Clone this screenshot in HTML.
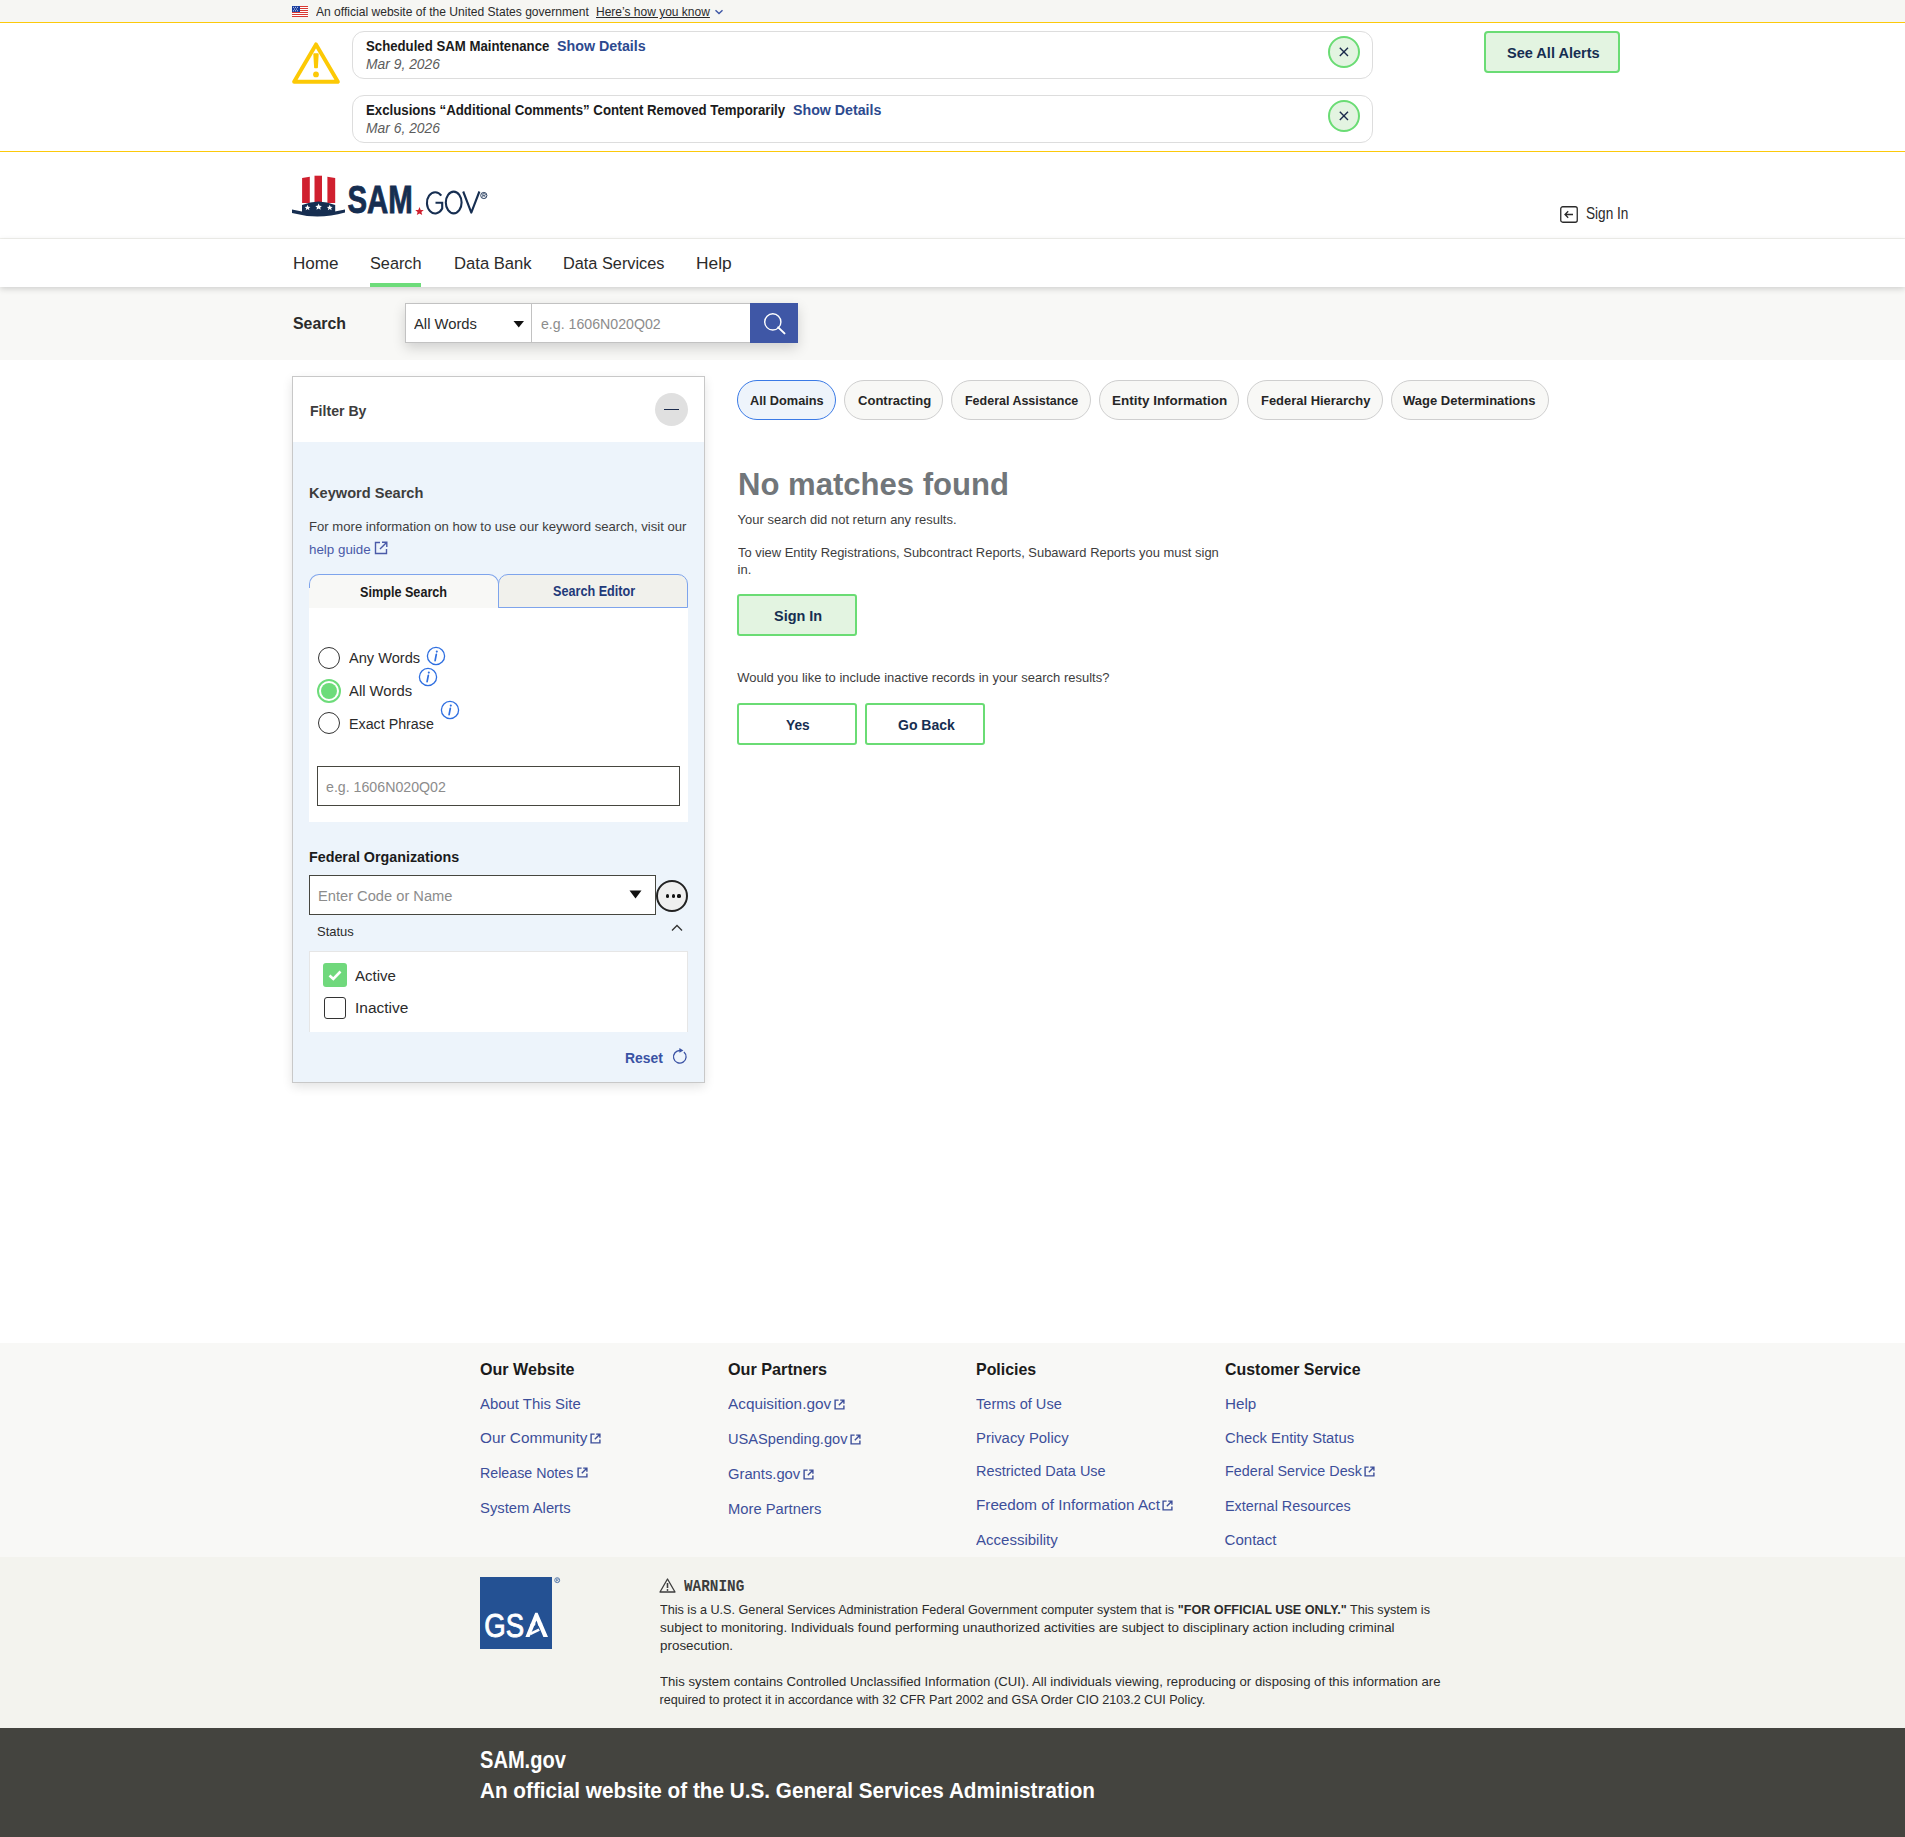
<!DOCTYPE html>
<html lang="en"><head><meta charset="utf-8"><title>SAM.gov Search</title>
<style>
html,body{margin:0;padding:0;}
body{width:1905px;height:1837px;position:relative;overflow:hidden;background:#fff;font-family:"Liberation Sans",sans-serif;}
.a{position:absolute;box-sizing:border-box;}
.t{position:absolute;white-space:nowrap;line-height:1;}
svg{position:absolute;overflow:visible;}
</style></head><body>
<!-- banner -->
<div class="a" style="left:0;top:0;width:1905px;height:22px;background:#f6f6f3;"></div>
<div class="a" style="left:0;top:22px;width:1905px;height:1px;background:#fcc90b;"></div>
<svg style="left:292px;top:6px" width="16" height="11" viewBox="0 0 16 11">
 <rect width="16" height="11" fill="#fff"/>
 <g fill="#d83933"><rect y="0" width="16" height="1"/><rect y="2" width="16" height="1"/><rect y="4" width="16" height="1"/><rect y="6" width="16" height="1"/><rect y="8" width="16" height="1"/><rect y="10" width="16" height="1"/></g>
 <rect width="8" height="6" fill="#1a3ea0"/>
 <g fill="#fff"><circle cx="1.5" cy="1.2" r=".5"/><circle cx="3.5" cy="1.2" r=".5"/><circle cx="5.5" cy="1.2" r=".5"/><circle cx="2.5" cy="3" r=".5"/><circle cx="4.5" cy="3" r=".5"/><circle cx="1.5" cy="4.8" r=".5"/><circle cx="3.5" cy="4.8" r=".5"/><circle cx="5.5" cy="4.8" r=".5"/></g>
</svg>
<svg style="left:714px;top:8px" width="10" height="8" viewBox="0 0 10 8"><path d="M1.5 2.2 L5 5.6 L8.5 2.2" fill="none" stroke="#3f57a6" stroke-width="1.4"/></svg>

<!-- alerts -->
<div class="a" style="left:0;top:151px;width:1905px;height:1px;background:#fcc90b;"></div>
<svg style="left:292px;top:42px" width="48" height="42" viewBox="0 0 48 42">
 <path d="M24 2.4 L45.9 39.7 L2.1 39.7 Z" fill="none" stroke="#fcc905" stroke-width="3.9" stroke-linejoin="round"/>
 <path d="M22.1 12 L25.9 12 L25.1 25.5 L22.9 25.5 Z" fill="#fcc905" stroke="#fcc905" stroke-width="1.6" stroke-linejoin="round"/>
 <circle cx="24" cy="32.4" r="2.9" fill="#fcc905"/>
</svg>
<div class="a" style="left:352px;top:31px;width:1021px;height:48px;border:1px solid #dddddd;border-radius:12px;"></div>
<div class="a" style="left:352px;top:95px;width:1021px;height:48px;border:1px solid #dddddd;border-radius:12px;"></div>
<div class="a" style="left:1328px;top:36px;width:32px;height:32px;border:2px solid #6adc74;border-radius:50%;background:#e3f4e1;"></div>
<div class="a" style="left:1328px;top:100px;width:32px;height:32px;border:2px solid #6adc74;border-radius:50%;background:#e3f4e1;"></div>
<svg style="left:1338px;top:46px" width="12" height="12" viewBox="0 0 12 12"><path d="M1.8 1.8 L10 10 M10 1.8 L1.8 10" stroke="#1b2b4c" stroke-width="1.4"/></svg>
<svg style="left:1338px;top:110px" width="12" height="12" viewBox="0 0 12 12"><path d="M1.8 1.8 L10 10 M10 1.8 L1.8 10" stroke="#1b2b4c" stroke-width="1.4"/></svg>
<div class="a" style="left:1484px;top:31px;width:136px;height:42px;border:2px solid #6adc74;border-radius:4px;background:#e3f4e1;"></div>

<!-- header -->
<svg style="left:285px;top:170px" width="210" height="55" viewBox="0 0 210 55">
 <g fill="#d0202f">
  <path d="M17.1 8 L24.8 6.7 L24.8 33 L17.1 33 Z"/>
  <path d="M29.5 5.7 L37 5.7 L37 33 L29.5 33 Z"/>
  <path d="M42.4 6.7 L50.2 8 L50.2 33 L42.4 33 Z"/>
 </g>
 <path d="M17 43 L17 35 Q33.6 28 50.2 35 L50.2 43 Z" fill="#162e51"/>
 <g fill="#fff">
  <path d="M22.5 34.8 l0.9 1.9 2 0.2 -1.5 1.3 0.5 2 -1.9 -1.1 -1.8 1.1 0.5 -2 -1.5 -1.3 2 -0.2z"/>
  <path d="M33.6 33.6 l1 2.2 2.3 0.2 -1.7 1.5 0.5 2.3 -2.1 -1.2 -2.1 1.2 0.5 -2.3 -1.7 -1.5 2.3 -0.2z"/>
  <path d="M44.7 34.8 l0.9 1.9 2 0.2 -1.5 1.3 0.5 2 -1.9 -1.1 -1.8 1.1 0.5 -2 -1.5 -1.3 2 -0.2z"/>
 </g>
 <path d="M7 39.5 Q33 46.5 60 39.5 L60 42.5 Q33 50 7 43 Z" fill="#162e51"/>
 <text x="62.5" y="42.8" font-family="'Liberation Sans', sans-serif" font-weight="700" font-size="39.5" fill="#162e51" stroke="#162e51" stroke-width="0.9" textLength="65.2" lengthAdjust="spacingAndGlyphs">SAM</text>
 <path d="M134.5 37 l1.2 2.9 3.1 0.2 -2.4 2 0.8 3 -2.7 -1.7 -2.7 1.7 0.8 -3 -2.4 -2 3.1 -0.2z" fill="#d0202f"/>
 <g fill="none" stroke="#162e51" stroke-width="2.1">
  <path d="M156.3 25.6 A8.3 10.6 0 1 0 157.2 38.6 L157.2 32.7 L150.5 32.7"/>
  <ellipse cx="168.7" cy="32.5" rx="7.9" ry="10.9"/>
  <path d="M178.2 21.5 L186.3 42.6 L194.4 21.5" stroke-linejoin="round"/>
 </g>
 <circle cx="198.8" cy="25.5" r="3.1" fill="none" stroke="#162e51" stroke-width="0.9"/>
 <path d="M197.8 27.4 L197.8 23.7 L199.3 23.7 Q200.4 23.7 200.4 24.7 Q200.4 25.6 199.3 25.6 L197.8 25.6 M199.2 25.6 L200.5 27.4" fill="none" stroke="#162e51" stroke-width="0.7"/>
</svg>
<div class="a" style="left:0;top:238px;width:1905px;height:1px;background:#f1f1ed;"></div>
<svg style="left:1560px;top:206px" width="18" height="17" viewBox="0 0 18 17">
 <rect x="0.75" y="0.75" width="16.5" height="15.5" rx="2" fill="none" stroke="#2b2b2b" stroke-width="1.3"/>
 <path d="M13 8.5 L5 8.5 M8.2 5.3 L5 8.5 L8.2 11.7" fill="none" stroke="#2b2b2b" stroke-width="1.3"/>
</svg>

<!-- nav + search -->
<div class="a" style="left:0;top:287px;width:1905px;height:73px;background:#f8f8f6;"></div>
<div class="a" style="left:0;top:239px;width:1905px;height:48px;background:#fff;box-shadow:0 2px 6px rgba(0,0,0,0.16);"></div>
<div class="a" style="left:370px;top:283px;width:51px;height:4px;background:#6ddc7a;"></div>
<div class="a" style="left:405px;top:303px;width:393px;height:40px;box-shadow:0 5px 12px rgba(0,0,0,0.16);"></div>
<div class="a" style="left:405px;top:303px;width:127px;height:40px;background:#fff;border:1px solid #c2c2c2;"></div>
<div class="a" style="left:531px;top:303px;width:220px;height:40px;background:#fff;border:1px solid #c2c2c2;"></div>
<div class="a" style="left:750px;top:303px;width:48px;height:40px;background:#3f57a6;"></div>
<svg style="left:513px;top:320px" width="12" height="8" viewBox="0 0 12 8"><path d="M0.5 1 L11 1 L5.75 7.5 Z" fill="#111"/></svg>
<svg style="left:762px;top:311px" width="24" height="24" viewBox="0 0 24 24"><circle cx="10.8" cy="10.9" r="8.1" fill="none" stroke="#fff" stroke-width="1.4"/><path d="M16.2 16.4 L22.5 22.4" stroke="#fff" stroke-width="2" stroke-linecap="round"/></svg>

<!-- filter panel -->
<div class="a" style="left:292px;top:376px;width:413px;height:707px;border:1px solid #c8c8c8;background:#edf4fb;box-shadow:0 4px 10px rgba(0,0,0,0.11);"></div>
<div class="a" style="left:293px;top:377px;width:411px;height:65px;background:#fff;"></div>
<div class="a" style="left:655px;top:393px;width:33px;height:33px;border-radius:50%;background:#e0e0e0;"></div>
<div class="a" style="left:664px;top:408.5px;width:15px;height:1.6px;background:#1b2b4c;"></div>
<svg style="left:374px;top:541px" width="14" height="14" viewBox="0 0 14 14"><path d="M6 1.5 L1.5 1.5 L1.5 12.5 L12.5 12.5 L12.5 8 M8 1.2 L12.8 1.2 L12.8 6 M12.8 1.2 L6 8" fill="none" stroke="#4a5aa8" stroke-width="1.4"/></svg>
<!-- tabs -->
<div class="a" style="left:309px;top:574px;width:190px;height:34px;background:#f8f8f6;border:1px solid #7ea4ec;border-bottom:none;border-radius:10px 10px 0 0;"></div>
<div class="a" style="left:498px;top:574px;width:190px;height:34px;background:#f1f1ec;border:1px solid #7ea4ec;border-radius:10px 10px 0 0;"></div>
<div class="a" style="left:309px;top:588px;width:189px;height:20px;background:#f8f8f6;"></div>
<div class="a" style="left:309px;top:608px;width:379px;height:214px;background:#fff;"></div>
<!-- radios -->
<div class="a" style="left:318px;top:647px;width:22px;height:22px;border:1.5px solid #333;border-radius:50%;background:#fff;"></div>
<div class="a" style="left:317px;top:679px;width:24px;height:24px;border:2px solid #6ddc7a;border-radius:50%;background:#fff;"></div>
<div class="a" style="left:321px;top:683px;width:16px;height:16px;border-radius:50%;background:#6ddc7a;"></div>
<div class="a" style="left:318px;top:712px;width:22px;height:22px;border:1.5px solid #333;border-radius:50%;background:#fff;"></div>
<svg style="left:426.1px;top:646.1px" width="20" height="20" viewBox="0 0 20 20"><circle cx="10" cy="10" r="8.6" fill="none" stroke="#2f6fe0" stroke-width="1.3"/><path d="M10.3 8.4 L9.1 14.6" stroke="#2f6fe0" stroke-width="1.7" stroke-linecap="round"/><circle cx="10.8" cy="5.6" r="1.05" fill="#2f6fe0"/></svg>
<svg style="left:418.0px;top:667.4px" width="20" height="20" viewBox="0 0 20 20"><circle cx="10" cy="10" r="8.6" fill="none" stroke="#2f6fe0" stroke-width="1.3"/><path d="M10.3 8.4 L9.1 14.6" stroke="#2f6fe0" stroke-width="1.7" stroke-linecap="round"/><circle cx="10.8" cy="5.6" r="1.05" fill="#2f6fe0"/></svg>
<svg style="left:440.2px;top:700.2px" width="20" height="20" viewBox="0 0 20 20"><circle cx="10" cy="10" r="8.6" fill="none" stroke="#2f6fe0" stroke-width="1.3"/><path d="M10.3 8.4 L9.1 14.6" stroke="#2f6fe0" stroke-width="1.7" stroke-linecap="round"/><circle cx="10.8" cy="5.6" r="1.05" fill="#2f6fe0"/></svg>
<div class="a" style="left:317px;top:766px;width:363px;height:40px;border:1px solid #46463f;background:#fff;"></div>
<!-- fed org -->
<div class="a" style="left:309px;top:875px;width:347px;height:40px;border:1px solid #46463f;background:#fff;"></div>
<svg style="left:629px;top:890px" width="13" height="9" viewBox="0 0 13 9"><path d="M0.5 0.5 L12.5 0.5 L6.5 8.5 Z" fill="#111"/></svg>
<div class="a" style="left:656px;top:879.5px;width:32px;height:32px;border:2px solid #222;border-radius:50%;background:#efefef;"></div>
<div class="a" style="left:666.2px;top:894.4px;width:3.2px;height:3.2px;border-radius:50%;background:#111;"></div>
<div class="a" style="left:671.6px;top:894.4px;width:3.2px;height:3.2px;border-radius:50%;background:#111;"></div>
<div class="a" style="left:677.4px;top:894.4px;width:3.2px;height:3.2px;border-radius:50%;background:#111;"></div>
<svg style="left:671px;top:923px" width="12" height="9" viewBox="0 0 12 9"><path d="M1 7.5 L6 2.5 L11 7.5" fill="none" stroke="#333" stroke-width="1.3"/></svg>
<div class="a" style="left:309px;top:951px;width:379px;height:81px;background:#fff;border:1px solid #e6e6e6;border-bottom:none;"></div>
<div class="a" style="left:323px;top:963px;width:24px;height:24px;border-radius:3px;background:#70d87c;"></div>
<svg style="left:323px;top:963px" width="24" height="24" viewBox="0 0 24 24"><path d="M6.5 12.5 L10.3 16 L17.5 8.5" fill="none" stroke="#fff" stroke-width="2.6"/></svg>
<div class="a" style="left:324px;top:997px;width:22px;height:22px;border:1.5px solid #333;border-radius:3px;background:#fff;"></div>
<svg style="left:672px;top:1048px" width="15" height="16" viewBox="0 0 15 16"><path d="M8.2 2.5 A6.3 6.3 0 1 0 11.9 4" fill="none" stroke="#3a52a4" stroke-width="1.3"/><path d="M7.4 0 L11.4 2.4 L7.4 4.8 Z" fill="#3a52a4"/></svg>

<!-- pills -->
<div class="a" style="left:737px;top:380px;width:99px;height:40px;border:1.5px solid #3a7ae6;border-radius:20px;background:#eef4fb;"></div>
<div class="a" style="left:844px;top:380px;width:99px;height:40px;border:1px solid #cfcfcf;border-radius:20px;background:#f8f8f6;"></div>
<div class="a" style="left:951px;top:380px;width:140px;height:40px;border:1px solid #cfcfcf;border-radius:20px;background:#f8f8f6;"></div>
<div class="a" style="left:1099px;top:380px;width:140px;height:40px;border:1px solid #cfcfcf;border-radius:20px;background:#f8f8f6;"></div>
<div class="a" style="left:1247px;top:380px;width:136px;height:40px;border:1px solid #cfcfcf;border-radius:20px;background:#f8f8f6;"></div>
<div class="a" style="left:1391px;top:380px;width:158px;height:40px;border:1px solid #cfcfcf;border-radius:20px;background:#f8f8f6;"></div>
<!-- result buttons -->
<div class="a" style="left:737px;top:594px;width:120px;height:42px;border:2px solid #6adc74;border-radius:3px;background:#e3f4e1;"></div>
<div class="a" style="left:737px;top:703px;width:120px;height:42px;border:2px solid #6adc74;border-radius:3px;background:#fff;"></div>
<div class="a" style="left:865px;top:703px;width:120px;height:42px;border:2px solid #6adc74;border-radius:3px;background:#fff;"></div>

<!-- footer -->
<div class="a" style="left:0;top:1343px;width:1905px;height:214px;background:#f8f8f6;"></div>
<div class="a" style="left:0;top:1557px;width:1905px;height:171px;background:#f3f3ee;"></div>
<div class="a" style="left:0;top:1728px;width:1905px;height:109px;background:#44443f;"></div>
<svg style="left:589.8px;top:1432.6px" width="11" height="11" viewBox="0 0 11 11"><path d="M4.6 1.1 L1.1 1.1 L1.1 9.9 L9.9 9.9 L9.9 6.4" fill="none" stroke="#3d4f9a" stroke-width="1.4"/><path d="M6.2 1.1 L9.9 1.1 L9.9 4.8 M9.8 1.2 L4.8 6.2" fill="none" stroke="#3d4f9a" stroke-width="1.4"/></svg>
<svg style="left:576.6px;top:1467.2px" width="11" height="11" viewBox="0 0 11 11"><path d="M4.6 1.1 L1.1 1.1 L1.1 9.9 L9.9 9.9 L9.9 6.4" fill="none" stroke="#3d4f9a" stroke-width="1.4"/><path d="M6.2 1.1 L9.9 1.1 L9.9 4.8 M9.8 1.2 L4.8 6.2" fill="none" stroke="#3d4f9a" stroke-width="1.4"/></svg>
<svg style="left:834.1px;top:1399.4px" width="11" height="11" viewBox="0 0 11 11"><path d="M4.6 1.1 L1.1 1.1 L1.1 9.9 L9.9 9.9 L9.9 6.4" fill="none" stroke="#3d4f9a" stroke-width="1.4"/><path d="M6.2 1.1 L9.9 1.1 L9.9 4.8 M9.8 1.2 L4.8 6.2" fill="none" stroke="#3d4f9a" stroke-width="1.4"/></svg>
<svg style="left:850.1px;top:1434.1px" width="11" height="11" viewBox="0 0 11 11"><path d="M4.6 1.1 L1.1 1.1 L1.1 9.9 L9.9 9.9 L9.9 6.4" fill="none" stroke="#3d4f9a" stroke-width="1.4"/><path d="M6.2 1.1 L9.9 1.1 L9.9 4.8 M9.8 1.2 L4.8 6.2" fill="none" stroke="#3d4f9a" stroke-width="1.4"/></svg>
<svg style="left:803.3px;top:1468.9px" width="11" height="11" viewBox="0 0 11 11"><path d="M4.6 1.1 L1.1 1.1 L1.1 9.9 L9.9 9.9 L9.9 6.4" fill="none" stroke="#3d4f9a" stroke-width="1.4"/><path d="M6.2 1.1 L9.9 1.1 L9.9 4.8 M9.8 1.2 L4.8 6.2" fill="none" stroke="#3d4f9a" stroke-width="1.4"/></svg>
<svg style="left:1162.1px;top:1500.0px" width="11" height="11" viewBox="0 0 11 11"><path d="M4.6 1.1 L1.1 1.1 L1.1 9.9 L9.9 9.9 L9.9 6.4" fill="none" stroke="#3d4f9a" stroke-width="1.4"/><path d="M6.2 1.1 L9.9 1.1 L9.9 4.8 M9.8 1.2 L4.8 6.2" fill="none" stroke="#3d4f9a" stroke-width="1.4"/></svg>
<svg style="left:1364.1px;top:1466.1px" width="11" height="11" viewBox="0 0 11 11"><path d="M4.6 1.1 L1.1 1.1 L1.1 9.9 L9.9 9.9 L9.9 6.4" fill="none" stroke="#3d4f9a" stroke-width="1.4"/><path d="M6.2 1.1 L9.9 1.1 L9.9 4.8 M9.8 1.2 L4.8 6.2" fill="none" stroke="#3d4f9a" stroke-width="1.4"/></svg>
<svg style="left:480px;top:1577px" width="82" height="72" viewBox="0 0 82 72">
 <rect x="0" y="0" width="72" height="72" fill="#245193"/>
 <text x="4.3" y="60.2" font-family="'Liberation Sans', sans-serif" font-size="34" fill="#fff" stroke="#fff" stroke-width="0.9" textLength="39.8" lengthAdjust="spacingAndGlyphs">GS</text>
 <g fill="#fff">
  <path d="M55.2 35.8 L57.6 35.8 L68 60 L63.4 60 L56.4 43.5 L49.6 60 L45.4 60 Z"/>
  <path d="M50.9 46.6 L55.6 46.6 L55 48.6 L50 48.6 Z"/>
  <path d="M57.6 46.6 L62.4 46.6 L61.3 48.8 L58.4 48.8 Z"/>
  <path d="M49.6 55.8 L58.6 51.6 L59.8 53.8 L50.6 58.2 Z"/>
 </g>
 <circle cx="77.2" cy="3.2" r="2.5" fill="none" stroke="#245193" stroke-width="0.7"/>
 <path d="M76.4 4.6 L76.4 1.9 L77.5 1.9 Q78.3 1.9 78.3 2.6 Q78.3 3.3 77.5 3.3 L76.4 3.3 M77.5 3.3 L78.4 4.6" fill="none" stroke="#245193" stroke-width="0.5"/>
</svg>
<svg style="left:659px;top:1578px" width="17" height="15" viewBox="0 0 17 15"><path d="M8.5 1 L16 14 L1 14 Z" fill="none" stroke="#3d3d3d" stroke-width="1.3" stroke-linejoin="round"/><path d="M8.5 5 L8.5 10" stroke="#3d3d3d" stroke-width="1.6"/><circle cx="8.5" cy="12" r="0.9" fill="#3d3d3d"/></svg>

<div class="t" id="t0" style="left:316.00px;top:5.31px;font-size:13.27px;font-weight:400;color:#2b2b2b;font-family:'Liberation Sans', sans-serif;transform:scaleX(0.9100);transform-origin:0 0;">An official website of the United States government</div>
<div class="t" id="t1" style="left:596.00px;top:5.31px;font-size:13.27px;font-weight:400;color:#2b2b2b;font-family:'Liberation Sans', sans-serif;transform:scaleX(0.9051);transform-origin:0 0;text-decoration:underline;">Here’s how you know</div>
<div class="t" id="t2" style="left:365.60px;top:40.01px;font-size:13.97px;font-weight:700;color:#1b1b1b;font-family:'Liberation Sans', sans-serif;transform:scaleX(0.9448);transform-origin:0 0;">Scheduled SAM Maintenance</div>
<div class="t" id="t3" style="left:556.60px;top:40.01px;font-size:13.97px;font-weight:700;color:#2d4a8f;font-family:'Liberation Sans', sans-serif;transform:scaleX(1.0205);transform-origin:0 0;">Show Details</div>
<div class="t" id="t4" style="left:365.60px;top:56.81px;font-size:14.39px;font-weight:400;color:#5c5c5c;font-family:'Liberation Sans', sans-serif;font-style:italic;transform:scaleX(0.9641);transform-origin:0 0;">Mar 9, 2026</div>
<div class="t" id="t5" style="left:365.60px;top:104.01px;font-size:13.97px;font-weight:700;color:#1b1b1b;font-family:'Liberation Sans', sans-serif;transform:scaleX(0.9480);transform-origin:0 0;">Exclusions “Additional Comments” Content Removed Temporarily</div>
<div class="t" id="t6" style="left:792.60px;top:104.01px;font-size:13.97px;font-weight:700;color:#2d4a8f;font-family:'Liberation Sans', sans-serif;transform:scaleX(1.0170);transform-origin:0 0;">Show Details</div>
<div class="t" id="t7" style="left:365.60px;top:120.81px;font-size:14.39px;font-weight:400;color:#5c5c5c;font-family:'Liberation Sans', sans-serif;font-style:italic;transform:scaleX(0.9641);transform-origin:0 0;">Mar 6, 2026</div>
<div class="t" id="t8" style="left:1506.60px;top:46.01px;font-size:14.39px;font-weight:700;color:#162e51;font-family:'Liberation Sans', sans-serif;transform:scaleX(1.0108);transform-origin:0 0;">See All Alerts</div>
<div class="t" id="t9" style="left:1586.00px;top:205.51px;font-size:15.64px;font-weight:400;color:#2b2b2b;font-family:'Liberation Sans', sans-serif;transform:scaleX(0.8708);transform-origin:0 0;">Sign In</div>
<div class="t" id="t10" style="left:292.60px;top:255.00px;font-size:17.04px;font-weight:400;color:#2b2b2b;font-family:'Liberation Sans', sans-serif;transform:scaleX(1.0037);transform-origin:0 0;">Home</div>
<div class="t" id="t11" style="left:370.00px;top:255.00px;font-size:17.04px;font-weight:400;color:#2b2b2b;font-family:'Liberation Sans', sans-serif;transform:scaleX(0.9553);transform-origin:0 0;">Search</div>
<div class="t" id="t12" style="left:453.50px;top:255.00px;font-size:17.04px;font-weight:400;color:#2b2b2b;font-family:'Liberation Sans', sans-serif;transform:scaleX(0.9767);transform-origin:0 0;">Data Bank</div>
<div class="t" id="t13" style="left:562.70px;top:255.00px;font-size:17.04px;font-weight:400;color:#2b2b2b;font-family:'Liberation Sans', sans-serif;transform:scaleX(0.9570);transform-origin:0 0;">Data Services</div>
<div class="t" id="t14" style="left:695.60px;top:255.00px;font-size:17.04px;font-weight:400;color:#2b2b2b;font-family:'Liberation Sans', sans-serif;transform:scaleX(1.0197);transform-origin:0 0;">Help</div>
<div class="t" id="t15" style="left:292.50px;top:314.90px;font-size:17.18px;font-weight:700;color:#2b2b2b;font-family:'Liberation Sans', sans-serif;transform:scaleX(0.9257);transform-origin:0 0;">Search</div>
<div class="t" id="t16" style="left:414.00px;top:315.90px;font-size:15.36px;font-weight:400;color:#2b2b2b;font-family:'Liberation Sans', sans-serif;transform:scaleX(0.9622);transform-origin:0 0;">All Words</div>
<div class="t" id="t17" style="left:540.70px;top:316.80px;font-size:14.80px;font-weight:400;color:#8c8c8c;font-family:'Liberation Sans', sans-serif;transform:scaleX(0.9568);transform-origin:0 0;">e.g. 1606N020Q02</div>
<div class="t" id="t18" style="left:309.80px;top:404.81px;font-size:13.97px;font-weight:700;color:#3d3d3d;font-family:'Liberation Sans', sans-serif;transform:scaleX(1.0093);transform-origin:0 0;">Filter By</div>
<div class="t" id="t19" style="left:309.30px;top:485.71px;font-size:14.53px;font-weight:700;color:#3d3d3d;font-family:'Liberation Sans', sans-serif;transform:scaleX(1.0056);transform-origin:0 0;">Keyword Search</div>
<div class="t" id="t20" style="left:309.30px;top:520.02px;font-size:13.55px;font-weight:400;color:#3d3d3d;font-family:'Liberation Sans', sans-serif;transform:scaleX(0.9678);transform-origin:0 0;">For more information on how to use our keyword search, visit our</div>
<div class="t" id="t21" style="left:309.30px;top:542.61px;font-size:13.55px;font-weight:400;color:#4a5aa8;font-family:'Liberation Sans', sans-serif;transform:scaleX(0.9865);transform-origin:0 0;">help guide</div>
<div class="t" id="t22" style="left:360.10px;top:585.41px;font-size:14.11px;font-weight:700;color:#1b1b1b;font-family:'Liberation Sans', sans-serif;transform:scaleX(0.8956);transform-origin:0 0;">Simple Search</div>
<div class="t" id="t23" style="left:552.50px;top:584.30px;font-size:14.11px;font-weight:700;color:#1f3a7a;font-family:'Liberation Sans', sans-serif;transform:scaleX(0.8959);transform-origin:0 0;">Search Editor</div>
<div class="t" id="t24" style="left:348.80px;top:649.80px;font-size:15.36px;font-weight:400;color:#2b2b2b;font-family:'Liberation Sans', sans-serif;transform:scaleX(0.9507);transform-origin:0 0;">Any Words</div>
<div class="t" id="t25" style="left:348.80px;top:682.90px;font-size:15.36px;font-weight:400;color:#2b2b2b;font-family:'Liberation Sans', sans-serif;transform:scaleX(0.9653);transform-origin:0 0;">All Words</div>
<div class="t" id="t26" style="left:349.00px;top:716.00px;font-size:15.36px;font-weight:400;color:#2b2b2b;font-family:'Liberation Sans', sans-serif;transform:scaleX(0.9285);transform-origin:0 0;">Exact Phrase</div>
<div class="t" id="t27" style="left:326.20px;top:779.71px;font-size:14.80px;font-weight:400;color:#8c8c8c;font-family:'Liberation Sans', sans-serif;transform:scaleX(0.9584);transform-origin:0 0;">e.g. 1606N020Q02</div>
<div class="t" id="t28" style="left:309.30px;top:849.91px;font-size:14.53px;font-weight:700;color:#1b1b1b;font-family:'Liberation Sans', sans-serif;transform:scaleX(0.9851);transform-origin:0 0;">Federal Organizations</div>
<div class="t" id="t29" style="left:318.10px;top:887.90px;font-size:15.36px;font-weight:400;color:#8c8c8c;font-family:'Liberation Sans', sans-serif;transform:scaleX(0.9545);transform-origin:0 0;">Enter Code or Name</div>
<div class="t" id="t30" style="left:317.40px;top:925.80px;font-size:12.57px;font-weight:400;color:#2b2b2b;font-family:'Liberation Sans', sans-serif;transform:scaleX(1.0339);transform-origin:0 0;">Status</div>
<div class="t" id="t31" style="left:355.00px;top:968.30px;font-size:15.36px;font-weight:400;color:#2b2b2b;font-family:'Liberation Sans', sans-serif;transform:scaleX(0.9797);transform-origin:0 0;">Active</div>
<div class="t" id="t32" style="left:355.00px;top:1000.10px;font-size:15.36px;font-weight:400;color:#2b2b2b;font-family:'Liberation Sans', sans-serif;transform:scaleX(1.0070);transform-origin:0 0;">Inactive</div>
<div class="t" id="t33" style="left:625.30px;top:1050.80px;font-size:14.53px;font-weight:700;color:#3a52a4;font-family:'Liberation Sans', sans-serif;transform:scaleX(0.9573);transform-origin:0 0;">Reset</div>
<div class="t" id="t34" style="left:750.00px;top:394.31px;font-size:13.69px;font-weight:700;color:#262626;font-family:'Liberation Sans', sans-serif;transform:scaleX(0.9307);transform-origin:0 0;">All Domains</div>
<div class="t" id="t35" style="left:857.60px;top:394.31px;font-size:13.69px;font-weight:700;color:#262626;font-family:'Liberation Sans', sans-serif;transform:scaleX(0.9537);transform-origin:0 0;">Contracting</div>
<div class="t" id="t36" style="left:964.70px;top:394.31px;font-size:13.69px;font-weight:700;color:#262626;font-family:'Liberation Sans', sans-serif;transform:scaleX(0.9119);transform-origin:0 0;">Federal Assistance</div>
<div class="t" id="t37" style="left:1111.50px;top:394.31px;font-size:13.69px;font-weight:700;color:#262626;font-family:'Liberation Sans', sans-serif;transform:scaleX(0.9836);transform-origin:0 0;">Entity Information</div>
<div class="t" id="t38" style="left:1260.60px;top:394.31px;font-size:13.69px;font-weight:700;color:#262626;font-family:'Liberation Sans', sans-serif;transform:scaleX(0.9454);transform-origin:0 0;">Federal Hierarchy</div>
<div class="t" id="t39" style="left:1403.40px;top:394.31px;font-size:13.69px;font-weight:700;color:#262626;font-family:'Liberation Sans', sans-serif;transform:scaleX(0.9492);transform-origin:0 0;">Wage Determinations</div>
<div class="t" id="t40" style="left:737.60px;top:468.81px;font-size:31.42px;font-weight:700;color:#71767a;font-family:'Liberation Sans', sans-serif;transform:scaleX(0.9888);transform-origin:0 0;">No matches found</div>
<div class="t" id="t41" style="left:737.60px;top:513.31px;font-size:12.99px;font-weight:400;color:#3d3d3d;font-family:'Liberation Sans', sans-serif;">Your search did not return any results.</div>
<div class="t" id="t42" style="left:737.60px;top:545.50px;font-size:12.99px;font-weight:400;color:#3d3d3d;font-family:'Liberation Sans', sans-serif;transform:scaleX(0.9958);transform-origin:0 0;">To view Entity Registrations, Subcontract Reports, Subaward Reports you must sign</div>
<div class="t" id="t43" style="left:737.60px;top:562.72px;font-size:12.99px;font-weight:400;color:#3d3d3d;font-family:'Liberation Sans', sans-serif;">in.</div>
<div class="t" id="t44" style="left:773.80px;top:609.02px;font-size:14.53px;font-weight:700;color:#162e51;font-family:'Liberation Sans', sans-serif;transform:scaleX(0.9960);transform-origin:0 0;">Sign In</div>
<div class="t" id="t45" style="left:737.20px;top:670.81px;font-size:12.99px;font-weight:400;color:#3d3d3d;font-family:'Liberation Sans', sans-serif;">Would you like to include inactive records in your search results?</div>
<div class="t" id="t46" style="left:786.00px;top:717.61px;font-size:14.53px;font-weight:700;color:#162e51;font-family:'Liberation Sans', sans-serif;transform:scaleX(0.9446);transform-origin:0 0;">Yes</div>
<div class="t" id="t47" style="left:897.50px;top:717.61px;font-size:14.53px;font-weight:700;color:#162e51;font-family:'Liberation Sans', sans-serif;transform:scaleX(0.9654);transform-origin:0 0;">Go Back</div>
<div class="t" id="t48" style="left:480.40px;top:1360.80px;font-size:17.04px;font-weight:700;color:#1b1b1b;font-family:'Liberation Sans', sans-serif;transform:scaleX(0.9453);transform-origin:0 0;">Our Website</div>
<div class="t" id="t49" style="left:728.40px;top:1360.80px;font-size:17.04px;font-weight:700;color:#1b1b1b;font-family:'Liberation Sans', sans-serif;transform:scaleX(0.9513);transform-origin:0 0;">Our Partners</div>
<div class="t" id="t50" style="left:976.40px;top:1360.80px;font-size:17.04px;font-weight:700;color:#1b1b1b;font-family:'Liberation Sans', sans-serif;transform:scaleX(0.9357);transform-origin:0 0;">Policies</div>
<div class="t" id="t51" style="left:1224.50px;top:1360.80px;font-size:17.04px;font-weight:700;color:#1b1b1b;font-family:'Liberation Sans', sans-serif;transform:scaleX(0.9357);transform-origin:0 0;">Customer Service</div>
<div class="t" id="t52" style="left:480.40px;top:1396.41px;font-size:15.08px;font-weight:400;color:#3d4f9a;font-family:'Liberation Sans', sans-serif;transform:scaleX(0.9883);transform-origin:0 0;">About This Site</div>
<div class="t" id="t53" style="left:480.40px;top:1430.41px;font-size:15.08px;font-weight:400;color:#3d4f9a;font-family:'Liberation Sans', sans-serif;transform:scaleX(1.0165);transform-origin:0 0;">Our Community</div>
<div class="t" id="t54" style="left:480.40px;top:1465.01px;font-size:15.08px;font-weight:400;color:#3d4f9a;font-family:'Liberation Sans', sans-serif;transform:scaleX(0.9438);transform-origin:0 0;">Release Notes</div>
<div class="t" id="t55" style="left:480.40px;top:1500.41px;font-size:15.08px;font-weight:400;color:#3d4f9a;font-family:'Liberation Sans', sans-serif;transform:scaleX(0.9828);transform-origin:0 0;">System Alerts</div>
<div class="t" id="t56" style="left:728.40px;top:1396.41px;font-size:15.08px;font-weight:400;color:#3d4f9a;font-family:'Liberation Sans', sans-serif;transform:scaleX(1.0167);transform-origin:0 0;">Acquisition.gov</div>
<div class="t" id="t57" style="left:728.40px;top:1431.21px;font-size:15.08px;font-weight:400;color:#3d4f9a;font-family:'Liberation Sans', sans-serif;transform:scaleX(0.9694);transform-origin:0 0;">USASpending.gov</div>
<div class="t" id="t58" style="left:728.40px;top:1466.10px;font-size:15.08px;font-weight:400;color:#3d4f9a;font-family:'Liberation Sans', sans-serif;transform:scaleX(0.9787);transform-origin:0 0;">Grants.gov</div>
<div class="t" id="t59" style="left:728.40px;top:1501.21px;font-size:15.08px;font-weight:400;color:#3d4f9a;font-family:'Liberation Sans', sans-serif;transform:scaleX(0.9775);transform-origin:0 0;">More Partners</div>
<div class="t" id="t60" style="left:976.40px;top:1396.41px;font-size:15.08px;font-weight:400;color:#3d4f9a;font-family:'Liberation Sans', sans-serif;transform:scaleX(0.9657);transform-origin:0 0;">Terms of Use</div>
<div class="t" id="t61" style="left:976.40px;top:1430.41px;font-size:15.08px;font-weight:400;color:#3d4f9a;font-family:'Liberation Sans', sans-serif;transform:scaleX(0.9866);transform-origin:0 0;">Privacy Policy</div>
<div class="t" id="t62" style="left:976.40px;top:1463.01px;font-size:15.08px;font-weight:400;color:#3d4f9a;font-family:'Liberation Sans', sans-serif;transform:scaleX(0.9610);transform-origin:0 0;">Restricted Data Use</div>
<div class="t" id="t63" style="left:976.40px;top:1497.01px;font-size:15.08px;font-weight:400;color:#3d4f9a;font-family:'Liberation Sans', sans-serif;transform:scaleX(1.0113);transform-origin:0 0;">Freedom of Information Act</div>
<div class="t" id="t64" style="left:976.40px;top:1531.91px;font-size:15.08px;font-weight:400;color:#3d4f9a;font-family:'Liberation Sans', sans-serif;transform:scaleX(0.9960);transform-origin:0 0;">Accessibility</div>
<div class="t" id="t65" style="left:1224.50px;top:1396.41px;font-size:15.08px;font-weight:400;color:#3d4f9a;font-family:'Liberation Sans', sans-serif;transform:scaleX(1.0095);transform-origin:0 0;">Help</div>
<div class="t" id="t66" style="left:1224.50px;top:1430.41px;font-size:15.08px;font-weight:400;color:#3d4f9a;font-family:'Liberation Sans', sans-serif;transform:scaleX(0.9810);transform-origin:0 0;">Check Entity Status</div>
<div class="t" id="t67" style="left:1224.50px;top:1463.01px;font-size:15.08px;font-weight:400;color:#3d4f9a;font-family:'Liberation Sans', sans-serif;transform:scaleX(0.9501);transform-origin:0 0;">Federal Service Desk</div>
<div class="t" id="t68" style="left:1224.50px;top:1497.60px;font-size:15.08px;font-weight:400;color:#3d4f9a;font-family:'Liberation Sans', sans-serif;transform:scaleX(0.9550);transform-origin:0 0;">External Resources</div>
<div class="t" id="t69" style="left:1224.50px;top:1531.91px;font-size:15.08px;font-weight:400;color:#3d4f9a;font-family:'Liberation Sans', sans-serif;">Contact</div>
<div class="t" id="t70" style="left:683.60px;top:1578.92px;font-size:16.24px;font-weight:700;color:#3d3d3d;font-family:'Liberation Mono', monospace;transform:scaleX(0.8839);transform-origin:0 0;">WARNING</div>
<div class="t" id="t71" style="left:659.50px;top:1604.00px;font-size:12.57px;font-weight:400;color:#2b2b2b;font-family:'Liberation Sans', sans-serif;transform:scaleX(1.0047);transform-origin:0 0;">This is a U.S. General Services Administration Federal Government computer system that is <b>"FOR OFFICIAL USE ONLY."</b> This system is</div>
<div class="t" id="t72" style="left:659.50px;top:1622.21px;font-size:12.57px;font-weight:400;color:#2b2b2b;font-family:'Liberation Sans', sans-serif;transform:scaleX(1.0647);transform-origin:0 0;">subject to monitoring. Individuals found performing unauthorized activities are subject to disciplinary action including criminal</div>
<div class="t" id="t73" style="left:659.50px;top:1640.21px;font-size:12.57px;font-weight:400;color:#2b2b2b;font-family:'Liberation Sans', sans-serif;transform:scaleX(1.0677);transform-origin:0 0;">prosecution.</div>
<div class="t" id="t74" style="left:659.50px;top:1676.00px;font-size:12.57px;font-weight:400;color:#2b2b2b;font-family:'Liberation Sans', sans-serif;transform:scaleX(1.0467);transform-origin:0 0;">This system contains Controlled Unclassified Information (CUI). All individuals viewing, reproducing or disposing of this information are</div>
<div class="t" id="t75" style="left:659.50px;top:1694.00px;font-size:12.57px;font-weight:400;color:#2b2b2b;font-family:'Liberation Sans', sans-serif;">required to protect it in accordance with 32 CFR Part 2002 and GSA Order CIO 2103.2 CUI Policy.</div>
<div class="t" id="t76" style="left:480.00px;top:1748.60px;font-size:23.46px;font-weight:700;color:#ffffff;font-family:'Liberation Sans', sans-serif;transform:scaleX(0.8556);transform-origin:0 0;">SAM.gov</div>
<div class="t" id="t77" style="left:480.00px;top:1780.11px;font-size:22.63px;font-weight:700;color:#ffffff;font-family:'Liberation Sans', sans-serif;transform:scaleX(0.9155);transform-origin:0 0;">An official website of the U.S. General Services Administration</div>
</body></html>
